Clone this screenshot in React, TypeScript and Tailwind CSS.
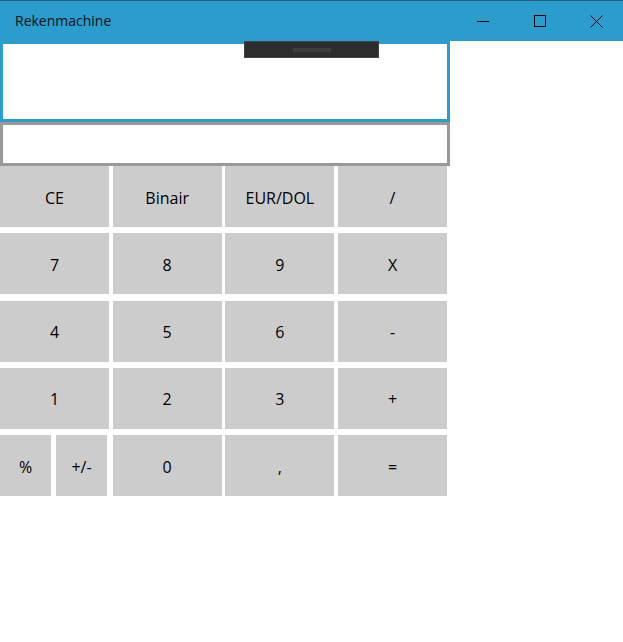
import React from "react";

const rows: string[][] = [
  ["CE", "Binair", "EUR/DOL", "/"],
  ["7", "8", "9", "X"],
  ["4", "5", "6", "-"],
  ["1", "2", "3", "+"],
];

const Key = ({ label, className = "" }: { label: string; className?: string }) => (
  <div className={`bg-[#cccccc] h-[61px] pt-[2px] flex items-center justify-center text-[16px] text-black ${className}`}>
    {label}
  </div>
);

export default function App() {
  return (
    <div className="relative w-[623px] h-[642px] bg-white overflow-hidden" style={{ fontFamily: '"Open Sans", "Noto Sans", sans-serif' }}>
      {/* Title bar */}
      <div className="h-[41px] bg-[#2a9ccd] border-t border-[#1f5f80] flex items-center">
        <span className="pl-[15px] text-[14px] text-[#111111] leading-none">Rekenmachine</span>
        <div className="ml-auto mr-[-2px] flex h-full">
          <div className="w-[57px] flex items-center justify-center">
            <div className="w-[12px] h-[1px] bg-black" />
          </div>
          <div className="w-[57px] flex items-center justify-center">
            <div className="w-[12px] h-[12px] border border-black" />
          </div>
          <div className="w-[57px] flex items-center justify-center">
            <svg width="13" height="13" viewBox="0 0 13 13" fill="none" stroke="black" strokeWidth="1">
              <path d="M0.5 0.5L12.5 12.5M12.5 0.5L0.5 12.5" />
            </svg>
          </div>
        </div>
      </div>

      <div className="w-[450px]">
        {/* Display */}
        <div className="h-[81px] border-[3px] border-[#2a9ccd] bg-white" />
        <div className="h-[44px] border-[3px] border-[#999999] bg-white" />

        {/* Keypad */}
        <div className="grid grid-cols-4 w-[447px] gap-x-[3.7px] gap-y-[6.25px]">
          {rows.map((row) =>
            row.map((k) => <Key key={k} label={k} />)
          )}
          <div className="flex gap-[5px]">
            <Key label="%" className="w-[51px]" />
            <Key label="+/-" className="w-[51px]" />
          </div>
          <Key label="0" />
          <Key label="," />
          <Key label="=" />
        </div>
      </div>

      {/* Drag handle overlay */}
      <div className="absolute left-[244px] top-[41px] w-[135px] h-[17px] bg-[#2d2d30] border border-[#444448] flex items-center justify-center">
        <div className="w-[38px] h-[4px] bg-[#3d3d40]" />
      </div>
    </div>
  );
}
